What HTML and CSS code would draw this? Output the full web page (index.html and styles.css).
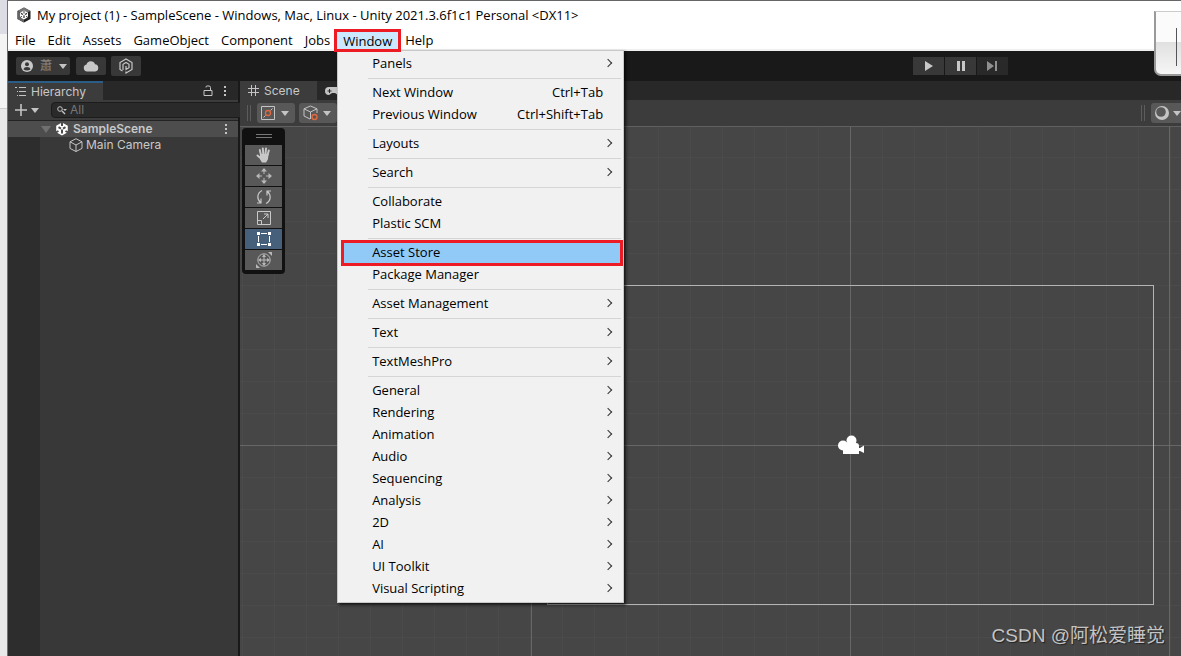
FILE: index.html
```html
<!DOCTYPE html>
<html lang="en">
<head>
<meta charset="utf-8">
<title>My project (1) - Unity</title>
<link rel="stylesheet" href="styles.css">
</head>
<body>
<div class="desktop">
  <div class="behind"><div class="behind-top"></div><div class="behind-mid"></div><div class="behind-low"></div></div>
  <div class="app">
    <header class="titlebar">
      <svg width="16" height="16" viewBox="0 0 16 16"><path d="M8 .5 14.5 4v8L8 15.5 1.500 12V4z" fill="#222"/><path d="M8 .5 14.500 4 8 7 1.500 4z" fill="#777"/><path d="M1.500 4 8 8v7.500L1.500 12z" fill="#666"/><path d="M8 3.500 12 5.700v4.600L8 12.500 4 10.300V5.700z" fill="#fff"/><path d="M8 8.300v2.700M7 7.500 5 6.400M9 7.500l2-1.100" stroke="#333" stroke-width="1.200"/><path d="M8 4v2.500M4 10.500l2-1.200M12 10.500l-2-1.200" stroke="#444"/></svg>
      <span>My project (1) - SampleScene - Windows, Mac, Linux - Unity 2021.3.6f1c1 Personal &lt;DX11&gt;</span>
    </header>
    <nav class="menubar">
      <button>File</button><button>Edit</button><button>Assets</button><button>GameObject</button><button>Component</button><button>Jobs</button>
      <div class="menu-anchor">
        <button class="open">Window</button>
        <div class="menu" role="menu">
          <button>Panels<i class="arrow"></i></button>
          <hr>
          <button>Next Window<kbd>Ctrl+Tab</kbd></button>
          <button>Previous Window<kbd>Ctrl+Shift+Tab</kbd></button>
          <hr>
          <button>Layouts<i class="arrow"></i></button>
          <hr>
          <button>Search<i class="arrow"></i></button>
          <hr>
          <button>Collaborate</button>
          <button>Plastic SCM</button>
          <hr>
          <button class="marked">Asset Store</button>
          <button>Package Manager</button>
          <hr>
          <button>Asset Management<i class="arrow"></i></button>
          <hr>
          <button>Text<i class="arrow"></i></button>
          <hr>
          <button>TextMeshPro<i class="arrow"></i></button>
          <hr>
          <button>General<i class="arrow"></i></button>
          <button>Rendering<i class="arrow"></i></button>
          <button>Animation<i class="arrow"></i></button>
          <button>Audio<i class="arrow"></i></button>
          <button>Sequencing<i class="arrow"></i></button>
          <button>Analysis<i class="arrow"></i></button>
          <button>2D<i class="arrow"></i></button>
          <button>AI<i class="arrow"></i></button>
          <button>UI Toolkit<i class="arrow"></i></button>
          <button>Visual Scripting<i class="arrow"></i></button>
        </div>
      </div>
      <button>Help</button>
    </nav>
    <div class="toolbar">
      <div class="tools-left">
        <button class="account"><svg width="12" height="12" viewBox="0 0 12 12"><circle cx="6" cy="6" r="6" fill="#c8c8c8"/><circle cx="6" cy="4.300" r="2" fill="#383838"/><path d="M2.400 9.300Q3 7 6 7t3.600 2.300Q8 10.500 6 10.500T2.400 9.300" fill="#383838"/></svg><span>蕭</span><i class="caret"></i></button>
        <button aria-label="Cloud"><svg width="16" height="12" viewBox="0 0 16 12"><path d="M4 11.500a3.500 3.500 0 0 1-.5-6.900A4.500 4.500 0 0 1 12 4.200a3.700 3.700 0 0 1 .3 7.300z" fill="#c8c8c8"/></svg></button>
        <button class="pkg" aria-label="Plastic SCM"><svg width="14" height="16" viewBox="0 0 14 16" fill="none" stroke="#c8c8c8" stroke-width="1.200"><path d="M3.500 13 1 11.500V4.500L7 1l6 3.500v7L7 15v-1.500M4 12V6.300L7 4.500l3 1.800v3.400L7 11.500V8"/></svg></button>
      </div>
      <div class="play">
        <button aria-label="Play"><svg width="16" height="16" viewBox="0 0 16 16"><path d="M4 3l8 5-8 5z" fill="#c8c8c8"/></svg></button>
        <button aria-label="Pause"><svg width="16" height="16" viewBox="0 0 16 16"><path d="M4 3h3v10H4zM9 3h3v10H9z" fill="#c8c8c8"/></svg></button>
        <button class="dim" aria-label="Step"><svg width="16" height="16" viewBox="0 0 16 16"><path d="M2 3l7 5-7 5zM10 3h2v10h-2z" fill="#909090"/></svg></button>
      </div>
    </div>
    <main class="work">
      <section class="hierarchy">
        <div class="tabs">
          <div class="tab focus"><svg width="12" height="12" viewBox="0 0 12 12" stroke="#c4c4c4"><path d="M0 1.500h2M4 1.500h7M4 5.500h7M4 9.500h7M2 5.500h1M2 9.500h1"/></svg>Hierarchy</div>
          <span class="grow"></span>
          <svg width="10" height="12" viewBox="0 0 10 12" fill="none" stroke="#c4c4c4"><path d="M1 5.500h8v5H1zM3 2.500V2q0-1 1-1h2q1.500 0 1.500 1.500v3"/></svg>
          <svg class="dots" width="4" height="12" viewBox="0 0 4 12" fill="#c4c4c4"><path d="M1 1h2v2H1zM1 5h2v2H1zM1 9h2v2H1z"/></svg>
        </div>
        <div class="search">
          <svg width="12" height="12" viewBox="0 0 12 12"><path d="M0 6h12M6 0v12" stroke="#c4c4c4" stroke-width="1.600"/></svg><i class="caret"></i>
          <label class="field">
            <svg width="12" height="10" viewBox="0 0 12 10"><circle cx="4" cy="4" r="2.300" fill="none" stroke="#c4c4c4"/><path d="M6 6l3 3" stroke="#c4c4c4" stroke-width="1.400"/><path d="M7 4h4L9 6z" fill="#c4c4c4"/></svg>
            <input type="text" placeholder="All" aria-label="Search hierarchy">
            <svg class="pick" width="16" height="14" viewBox="0 0 16 14" fill="none" stroke="#c4c4c4"><path d="M5.500 7V1.500h8v9H8M2.500 8.500H7V12.500H2.500zM7 8l4-4M8 3.500h3.500V7"/></svg>
          </label>
        </div>
        <div class="tree">
          <div class="row scene-row"><i class="fold"></i><svg width="14" height="14" viewBox="0 0 14 14"><path d="M7 .5 12.800 3.800v6.500L7 13.500 1.200 10.300V3.800z" fill="#fff"/><path d="M7 7.500V11.500M6 6.600 3.500 5.200M8 6.600l2.500-1.400" stroke="#4d4d4d" stroke-width="2"/><path d="M7 0v4M0 11l3.500-2M14 11l-3.500-2" stroke="#4d4d4d" stroke-width="2"/></svg><b>SampleScene</b><svg class="dots" width="4" height="12" viewBox="0 0 4 12" fill="#c4c4c4"><path d="M1 1h2v2H1zM1 5h2v2H1zM1 9h2v2H1z"/></svg></div>
          <div class="row child"><svg width="14" height="14" viewBox="0 0 14 14" fill="none" stroke="#c4c4c4"><path d="M7 .7 13 3.800v6.600L7 13.500 1 10.400V3.800zM1 3.800 7 7l6-3.200M7 7v6.500"/></svg>Main Camera</div>
        </div>
      </section>
      <section class="scene">
        <div class="tabs">
          <div class="tab"><svg width="11" height="12" viewBox="0 0 11 12" stroke="#c4c4c4"><path d="M3.500 0v11M7.500 0v11M0 3.500h11M0 7.500h11"/></svg>Scene</div>
          <svg class="pad" width="18" height="8" viewBox="0 0 18 8"><path d="M4 0h9a4 4 0 0 1 0 8L10 6H7L4 8a4 4 0 0 1 0-8" fill="#c4c4c4"/><path d="M2.500 4h4M4.500 2v4" stroke="#282828"/></svg>
        </div>
        <div class="scene-tools">
          <i class="grip"></i>
          <button aria-label="Tool handle"><svg width="14" height="14" viewBox="0 0 14 14" fill="none" stroke="#c4c4c4"><path d="M.5.500h13v13H.500zM2.500 11.500 4.500 9.500M9.500 4.500l2-2"/><circle cx="7" cy="7" r="2.500" stroke="#e0683f" stroke-width="1.300"/></svg><i class="caret"></i></button>
          <button aria-label="Handle rotation"><svg width="16" height="16" viewBox="0 0 16 16" fill="none" stroke="#c4c4c4"><path d="M7 14 1 11V3.800L7.500 1 14 3.800V8M1 3.800 7.500 7 14 3.800M7.500 7v7"/><circle cx="11.500" cy="12" r="2.500" stroke="#e0683f" stroke-width="1.400"/></svg><i class="caret"></i></button>
          <span class="grow"></span>
          <i class="grip"></i>
          <button class="shade" aria-label="Draw mode"><svg width="14" height="14" viewBox="0 0 14 14"><circle cx="7" cy="7" r="7" fill="#c4c4c4"/><circle cx="6" cy="6" r="4.800" fill="#585858"/></svg><i class="caret"></i></button>
        </div>
        <div class="canvas">
          <svg class="world" width="100%" height="100%">
            <defs><pattern id="cells" width="32" height="32" patternUnits="userSpaceOnUse" x="2" y="-2"><path d="M.5 0v32M0 .500h32" stroke="#4b4b4b" fill="none"/></pattern></defs>
            <rect width="100%" height="100%" fill="url(#cells)"/>
            <path d="M291.500 0v600M610.500 0v600M929.500 0v600M0 318.500h2000" stroke="#676767" fill="none"/>
            <rect x="307.500" y="158.500" width="606" height="319" fill="none" stroke="#b4b4b4"/>
            <g fill="#fff"><path d="M603 316h13q3 0 3 3v2h1l4-2.500v7.500l-4-2h-1v3H603z"/><circle cx="603" cy="318.500" r="5"/><circle cx="611.500" cy="313.500" r="5"/></g>
          </svg>
          <div class="palette">
            <i class="handle"></i>
            <button aria-label="Hand"><svg width="16" height="16" viewBox="0 0 16 16" fill="none" stroke="#c8c8c8" stroke-width="2" stroke-linecap="round"><path d="M5 8 3.800 3M7.300 7 6.800 1.500M9.500 7l.5-5.500M11.500 8l1.300-4.500M5 11.500 1.500 8.500"/><path d="M5 8h6.500l-.5 4-1.500 2.500h-3L5 12z" fill="#c8c8c8"/></svg></button>
            <button aria-label="Move"><svg width="16" height="16" viewBox="0 0 16 16" fill="#b8b8b8" stroke="#b8b8b8"><path d="M8 2v4M8 10v4M2 8h4M10 8h4"/><path stroke="none" d="M8 0l3 3.500H5zM8 16l3-3.500H5zM0 8l3.500-3v6zM16 8l-3.500-3v6z"/></svg></button>
            <button aria-label="Rotate"><svg width="16" height="16" viewBox="0 0 16 16" fill="none" stroke="#c8c8c8" stroke-width="1.200"><path d="M6 1.500C1 4 .5 10 4.500 13.500M1 14h4V9.500M10 14.500c5-2.500 5.500-8.500 1.500-12M15 2h-4v4.500"/></svg></button>
            <button aria-label="Scale"><svg width="16" height="16" viewBox="0 0 16 16" fill="none" stroke="#c8c8c8"><path d="M1.500 1.500h13v13h-13zM1.500 10.500h4v4M7 9l5-5M8 4h4v4"/></svg></button>
            <button class="on" aria-label="Rect"><svg width="16" height="16" viewBox="0 0 16 16"><path d="M5 2.500h6M5 13.500h6M2.500 5v6M13.500 5v6" stroke="#fff"/><path d="M1 1h3v3H1zM12 1h3v3h-3zM1 12h3v3H1zM12 12h3v3h-3z" fill="#fff"/></svg></button>
            <button aria-label="Transform"><svg width="16" height="16" viewBox="0 0 16 16" fill="none" stroke="#b8b8b8"><circle cx="8" cy="8" r="6.200"/><path d="M8 3v10M3 8h10"/><path stroke="none" fill="#b8b8b8" d="M8 2l2 3H6zM8 14l2-3H6zM2 8l3-2v4zM14 8l-3-2v4zM12 0h4v4zM0 12v4h4z"/></svg></button>
          </div>
          <div class="credit">CSDN @阿松爱睡觉</div>
        </div>
      </section>
    </main>
    <div class="float-box"></div>
  </div>
</div>
</body>
</html>
```
FILE: styles.css
```css
* { box-sizing: border-box; }
body { margin: 0; }
button { border: 0; padding: 0; margin: 0; font: inherit; color: inherit; background: none; }
svg { display: block; flex: none; }

.desktop { display: flex; height: 100vh; min-height: 600px; overflow: hidden; font: 13px/20px "Open Sans", "Noto Sans CJK SC", sans-serif; color: #000; }
.behind { width: 8px; display: flex; flex-direction: column; background: #e9e9e9; border-right: 1px solid #707070; }
.behind-top { height: 34px; background: #dcdce4; }
.behind-mid { height: 75px; background: #f4f4f4; border-bottom: 1px solid #cfcfcf; }
.behind-low { flex: 1; }

.app { flex: 1; min-width: 0; position: relative; display: flex; flex-direction: column; background: #fff; border-top: 1px solid #666; }
.titlebar { height: 29px; display: flex; align-items: center; gap: 5px; padding: 0 0 1px 8px; white-space: nowrap; }
.menubar { height: 21px; display: flex; padding-left: 1px; border-bottom: 2px solid #f0f0f0; }
.menubar > button { padding: 0 6px; line-height: 20px; }
.menu-anchor { position: relative; display: flex; }
.open { padding: 0 6px; margin: -1px -2px 0 -2px; height: 23px; line-height: 16px; border: 3px solid #ed1c24; background: #cce8ff; position: relative; z-index: 4; }
.menu { position: absolute; left: 1px; top: 20px; width: 287px; z-index: 3; display: flex; flex-direction: column; padding: 2px; background: #f1f1f1; border: 1px solid #c8c8c8; box-shadow: 2px 2px 3px rgba(0, 0, 0, .7); }
.menu button { display: flex; align-items: center; height: 22px; padding: 0 10px 2px 32px; text-align: left; }
.menu hr { width: 253px; height: 1px; margin: 3px 0 3px auto; border: 0; background: #d5d5d5; }
.menu kbd { margin-left: auto; margin-right: 8px; font: inherit; }
.arrow { width: 6px; height: 6px; margin-left: auto; border: solid #333; border-width: 1px 1px 0 0; transform: rotate(45deg); }
.menu .marked { height: 26px; margin: -2px -2px -2px 1px; padding-left: 28px; border: 3px solid #ed1c24; background: #91c9f7; }

.toolbar { height: 30px; flex: none; display: grid; grid-template-columns: 1fr 268px; align-items: center; background: #191919; color: #c4c4c4; }
.tools-left, .play { display: flex; align-items: center; }
.tools-left { gap: 6px; padding-left: 8px; }
.tools-left button { width: 30px; height: 18px; display: flex; align-items: center; justify-content: center; background: #383838; border-radius: 2px; }
.tools-left .account { width: 54px; justify-content: space-between; padding: 0 3px 0 5px; font-size: 12px; line-height: 18px; color: #888; }
.tools-left .pkg { height: 20px; margin-left: -1px; }
.play { gap: 1px; }
.play button { width: 31px; height: 18px; display: grid; place-items: center; background: #383838; }
.play .dim { background: #292929; }
.caret { flex: none; border: 4px solid transparent; border-top: 5px solid #c4c4c4; border-bottom: 0; }

.work { flex: 1; min-height: 0; display: flex; gap: 2px; background: #191919; color: #c8c8c8; font: 12px/16px Inter, "Noto Sans", sans-serif; }
.tabs { height: 19px; display: flex; align-items: center; background: #282828; }
.tab { height: 19px; display: flex; align-items: center; gap: 5px; background: #3c3c3c; }
.grow { flex: 1; }
.hierarchy { width: 230px; flex: none; display: flex; flex-direction: column; background: #383838; }
.hierarchy .tabs { gap: 10px; padding-right: 11px; }
.focus { width: 95px; padding-left: 7px; border-top: 2px solid #2c5d87; gap: 4px; }
.search { height: 21px; display: flex; align-items: center; gap: 4px; padding: 0 3px 0 7px; background: #3c3c3c; border-bottom: 1px solid #232323; }
.field { flex: 1; height: 16px; margin-left: 8px; display: flex; align-items: center; padding-left: 4px; background: #2a2a2a; border: 1px solid #1c1c1c; border-radius: 4px; }
.field input { flex: 1; min-width: 0; padding: 0 2px; border: 0; background: none; font: 12px/14px Inter, sans-serif; color: #c4c4c4; outline: none; }
.field input::placeholder { color: #777; opacity: 1; }
.pick { background: #3c3c3c; }
.tree { flex: 1; background: linear-gradient(90deg, #2d2d2d 32px, #383838 32px); }
.row { height: 16px; display: flex; align-items: center; }
.scene-row { background: #4d4d4d; gap: 4px; padding: 0 10px 0 33px; }
.scene-row b { font-weight: 600; }
.scene-row .dots { margin-left: auto; }
.fold { border: 5px solid transparent; border-top: 7px solid #707070; border-bottom: 0; }
.child { padding-left: 61px; gap: 3px; }

.scene { flex: 1; min-width: 0; display: flex; flex-direction: column; }
.scene .tab { width: 77px; padding-left: 8px; }
.pad { margin-left: 8px; }
.scene-tools { height: 27px; flex: none; display: flex; align-items: center; gap: 4px; padding-left: 7px; background: #3c3c3c; border-bottom: 1px solid #606060; overflow: hidden; }
.scene-tools button { flex: none; width: 38px; height: 20px; display: flex; align-items: center; justify-content: space-between; padding: 0 6px 0 4px; background: #585858; border-radius: 3px; }
.grip { width: 4px; height: 16px; margin-right: 2px; border: solid #5c5c5c; border-width: 0 1px; }
.scene-tools .shade { width: 36px; margin-right: -6px; }
.canvas { position: relative; flex: 1; min-height: 0; background: #464646; overflow: hidden; }
.world { position: absolute; inset: 0; }
.palette { position: absolute; left: 2px; top: 1px; width: 43px; padding: 6px 3px 4px; display: flex; flex-direction: column; gap: 1px; background: #111; border-radius: 4px; }
.handle { width: 16px; height: 4px; margin: 0 auto 6px; border: solid #777; border-width: 1px 0; }
.palette button { height: 20px; display: grid; place-items: center; background: #585858; }
.palette .on { background: #46607c; }
.credit { position: absolute; right: 16px; bottom: 6px; font: 19px/28px "Liberation Sans", "Noto Sans CJK SC", sans-serif; color: #c4c4c4; text-shadow: 1px 1px 1px #222; }
.float-box { position: absolute; right: -8px; top: 10px; width: 35px; height: 65px; z-index: 5; border: 2px solid #999; border-top: 1px solid #ccc; border-radius: 0 0 0 7px; background: linear-gradient(90deg, transparent 20px, #555 20px, #555 21px, transparent 21px) 0 16px / 100% 38px no-repeat, linear-gradient(#fbfbfb 30px, #e0e0e0 30px, #f6f6f6); }
```
